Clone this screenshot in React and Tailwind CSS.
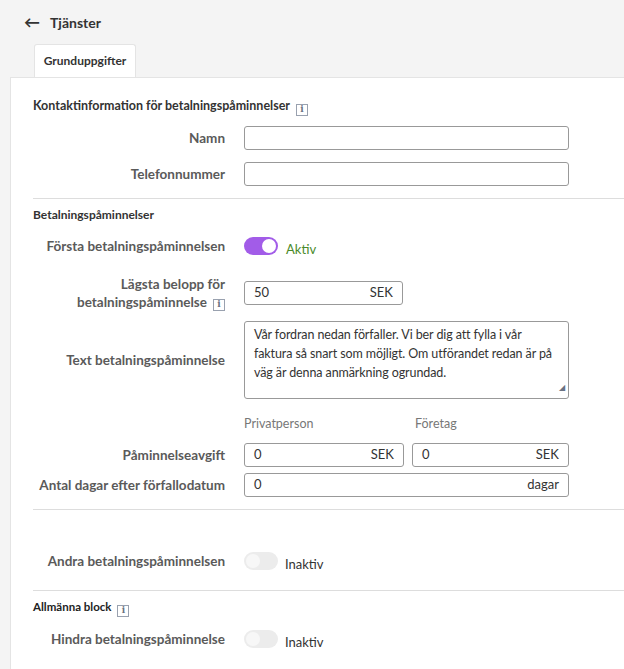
const F = { fontFamily: "Lato, 'Open Sans', sans-serif" };

function Info() {
  return <span className="inline-flex items-center justify-center w-[12px] h-[12px] border border-gray-400 text-[9px] leading-none text-gray-500 ml-[6px]" style={{ fontFamily: "'DejaVu Serif', serif" }}>i</span>;
}

function Row({ label, children, className = "" }) {
  return (
    <div className={`flex items-center ${className}`}>
      <div className="w-[192px] text-right text-[13.5px] font-bold text-[#5a5a5a] leading-[18px]">{label}</div>
      <div className="ml-[19px] flex-1 flex items-center">{children}</div>
    </div>
  );
}

function Input({ w, value = "", unit }) {
  return (
    <div className={`${w} h-[24px] border border-[#999] rounded-[3px] flex items-center px-[9px] text-[13px] text-[#333] bg-white`}>
      <span className="flex-1">{value}</span>
      {unit && <span>{unit}</span>}
    </div>
  );
}

function Toggle({ on }) {
  return on ? (
    <div className="flex items-center">
      <div className="w-[34px] h-[18px] rounded-full bg-[#a25ce8] flex items-center justify-end px-[2px]"><div className="w-[14px] h-[14px] rounded-full bg-white" /></div>
      <span className="ml-[8px] mt-[8px] text-[13px] text-[#4a8a2a]">Aktiv</span>
    </div>
  ) : (
    <div className="flex items-center">
      <div className="w-[34px] h-[18px] rounded-full bg-[#ececec] flex items-center px-[2px]"><div className="w-[14px] h-[14px] rounded-full bg-[#f7f7f7]" /></div>
      <span className="ml-[7px] mt-[8px] text-[13px] text-[#333]">Inaktiv</span>
    </div>
  );
}

export default function App() {
  return (
    <div className="w-[624px] h-[669px] bg-[#f4f4f4] overflow-hidden" style={F}>
      <div className="flex items-center h-[44px] pl-[24px] text-[14px] font-bold text-[#333]">
        <span className="text-[16px] mr-[10px]">←</span>Tjänster
      </div>
      <div className="ml-[34px] w-[102px] h-[33px] bg-white border border-b-0 border-[#e4e4e4] rounded-t-[3px] flex items-center justify-center text-[12px] font-bold text-[#333]">Grunduppgifter</div>
      <div className="ml-[10px] bg-white border-t border-l border-[#e4e4e4] h-[600px] pl-[22px]">
        <div className="h-[48px] pt-[19px] text-[12.5px] font-bold text-[#333] flex items-start">Kontaktinformation för betalningspåminnelser<span className="mt-[2px]"><Info /></span></div>
        <Row label="Namn"><Input w="w-[325px]" /></Row>
        <Row label="Telefonnummer" className="mt-[12px]"><Input w="w-[325px]" /></Row>
        <div className="border-t border-[#ddd] mt-[12px]" />
        <div className="pt-[7px] text-[12px] font-bold text-[#333] h-[32px]">Betalningspåminnelser</div>
        <Row label="Första betalningspåminnelsen" className="h-[30px]"><Toggle on /></Row>
        <Row label={<>Lägsta belopp för<br />betalningspåminnelse<Info /></>} className="mt-[14px]"><Input w="w-[159px]" value="50" unit="SEK" /></Row>
        <Row label="Text betalningspåminnelse" className="mt-[10px]">
          <div className="w-[325px] h-[78px] border border-[#999] rounded-[3px] px-[9px] py-[3px] text-[12.5px] leading-[19px] text-[#333] relative tracking-[-0.1px]">
            Vår fordran nedan förfaller. Vi ber dig att fylla i vår faktura så snart som möjligt. Om utförandet redan är på väg är denna anmärkning ogrundad.
            <span className="absolute right-[3px] bottom-[1px] text-[8px] text-gray-500">◢</span>
          </div>
        </Row>
        <div className="flex ml-[211px] mt-[16px] text-[12.5px] text-[#777] h-[26px]"><span className="w-[171px]">Privatperson</span><span>Företag</span></div>
        <Row label="Påminnelseavgift" className="mt-[2px]"><Input w="w-[160px]" value="0" unit="SEK" /><div className="ml-[8px]"><Input w="w-[157px]" value="0" unit="SEK" /></div></Row>
        <Row label="Antal dagar efter förfallodatum" className="mt-[6px]"><Input w="w-[325px]" value="0" unit="dagar" /></Row>
        <div className="border-t border-[#ddd] mt-[12px]" />
        <Row label="Andra betalningspåminnelsen" className="mt-[41px] h-[20px]"><Toggle /></Row>
        <div className="border-t border-[#ddd] mt-[19px]" />
        <div className="pt-[7px] text-[11.5px] font-bold text-[#222] h-[38px] flex items-start">Allmänna block<span className="mt-[2px]"><Info /></span></div>
        <Row label="Hindra betalningspåminnelse" className="h-[20px]"><Toggle /></Row>
      </div>
    </div>
  );
}
